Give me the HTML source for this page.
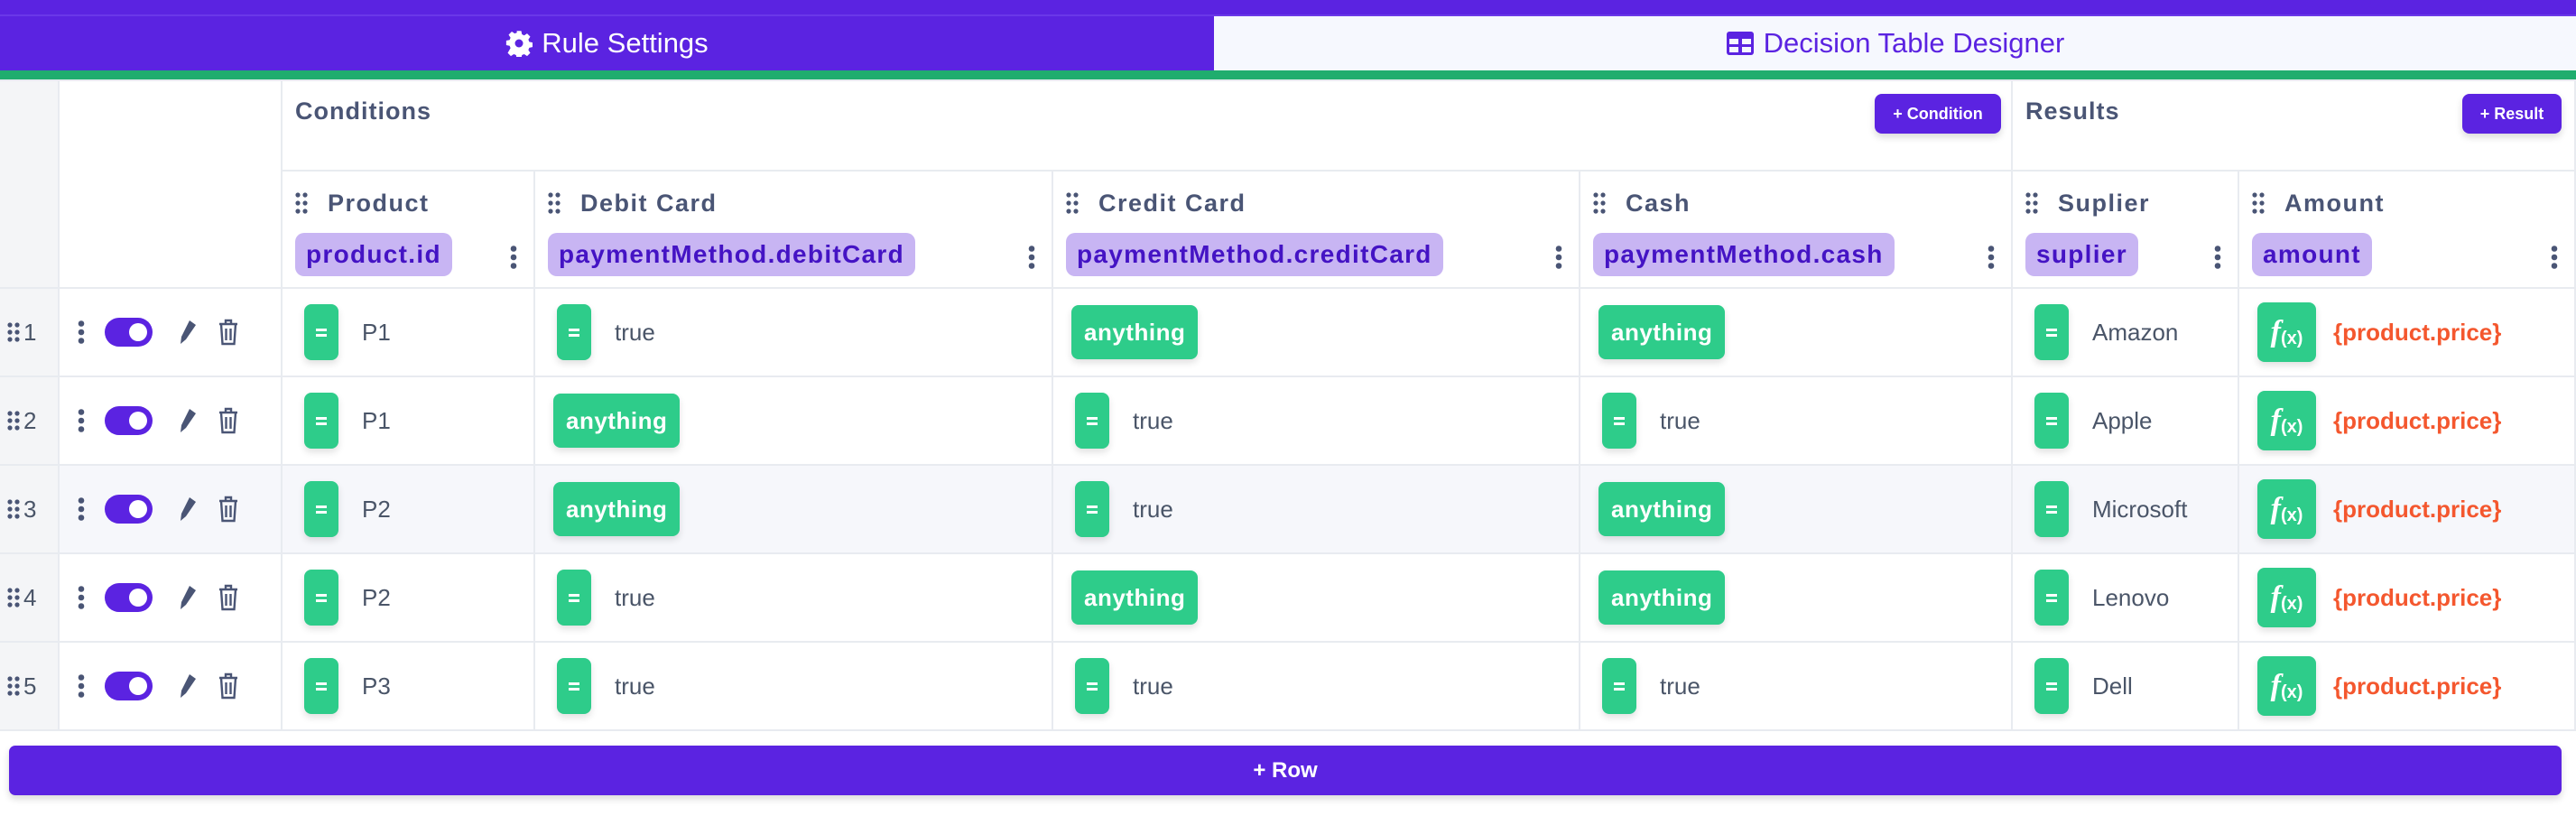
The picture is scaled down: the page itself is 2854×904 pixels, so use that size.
<!DOCTYPE html>
<html><head><meta charset="utf-8">
<style>
*{box-sizing:border-box;margin:0;padding:0}
body{width:2854px;height:904px;background:#fff;font-family:"Liberation Sans",sans-serif;position:relative;overflow:hidden}
.top{position:absolute;left:0;top:0;width:2854px;height:16px;background:#5b23e1}
.topl{position:absolute;left:0;top:16px;width:2854px;height:2px;background:#6a38e8}
.tab{position:absolute;top:18px;height:60px;display:flex;align-items:center;justify-content:center;font-size:31px}
.t1{left:0;width:1345px;background:#5b23e1;color:#fff}
.t2{left:1345px;width:1509px;background:#f6f8fe;color:#5b23e1}
.tab svg{margin-right:10px}
.green{position:absolute;left:0;top:78px;width:2854px;height:10px;background:#20ad6e}
.gap{position:absolute;left:0;top:88px;width:2854px;height:2px;background:#e8ebf0}
.grid{position:absolute;left:0;top:90px;display:grid;grid-template-columns:66px 247px 280px 574px 584px 479px 251px 373px;grid-template-rows:100px 130px 98px 98px 98px 98px 98px}
.c{border-right:2px solid #e8ebf0;border-bottom:2px solid #e8ebf0;position:relative;display:flex;align-items:center}
.sec{align-items:flex-start;padding:18px 0 0 14px;font-size:27px;font-weight:bold;color:#4a5575;letter-spacing:1px}
.btn{position:absolute;top:14px;height:44px;background:#5b23e1;color:#fff;border-radius:8px;font-size:18px;font-weight:bold;display:flex;align-items:center;justify-content:center;box-shadow:0 4px 8px rgba(0,0,0,.15);letter-spacing:0}
.hd{flex-direction:column;align-items:flex-start;justify-content:flex-start;padding:20px 0 0 14px}
.hl{display:flex;align-items:center;font-size:27px;font-weight:bold;color:#4a5575;letter-spacing:1.5px;height:26px;margin-top:2px}
.hl svg{margin-right:22px}
.chip{margin-top:20px;height:48px;background:#c8b5f3;border-radius:10px;color:#4413c4;font-size:28px;font-weight:bold;letter-spacing:1.3px;padding:0 12px;display:flex;align-items:center}
.keb{position:absolute;right:18px;top:82px}
.eq{width:38px;height:62px;background:#2ecc8a;border-radius:8px;box-shadow:0 4px 8px rgba(0,0,0,.12);display:flex;align-items:center;justify-content:center;margin-left:24px;flex:none}
.eq i{display:block;width:12px;height:3px;background:#fff;box-shadow:0 6px 0 #fff;margin-top:-6px}
.txt{font-size:26px;color:#4a5568;margin-left:26px}
.any{margin-left:20px;height:60px;padding:0 14px;background:#2ecc8a;color:#fff;font-size:26px;font-weight:bold;border-radius:8px;display:flex;align-items:center;box-shadow:0 4px 8px rgba(0,0,0,.12);letter-spacing:.5px}
.fx{margin-left:20px;width:65px;height:66px;background:#2ecc8a;border-radius:8px;color:#fff;display:flex;align-items:center;justify-content:center;font-family:"Liberation Serif",serif;font-style:italic;font-weight:bold;font-size:34px;box-shadow:0 4px 8px rgba(0,0,0,.12)}
.fx small{font-family:"Liberation Sans",sans-serif;font-style:normal;font-size:20px;margin-top:14px}
.price{color:#f4572e;font-size:26px;font-weight:bold;margin-left:19px}
.c0{background:#f4f5f7;justify-content:flex-start;padding-left:8px;font-size:26px;color:#4a5568}
.c0 span{margin-left:4px}
.c1{padding-left:20px}
.alt{background:#f6f7fb}
.rowbtn{position:absolute;left:10px;top:826px;width:2828px;height:55px;background:#5b23e1;border-radius:7px;color:#fff;font-size:24px;font-weight:bold;display:flex;align-items:center;justify-content:center;box-shadow:0 4px 8px rgba(0,0,0,.15)}
</style></head><body>
<div class="top"></div><div class="topl"></div>
<div class="tab t1"><svg width="30" height="30" viewBox="0 0 24 24"><path fill="#fff" d="M10 1h4l.6 3 2 1 2.6-1.7 2.8 2.8-1.7 2.6.8 2 3 .6v4l-3 .6-.8 2 1.7 2.6-2.8 2.8-2.6-1.7-2 .8-.6 3h-4l-.6-3-2-.8-2.6 1.7-2.8-2.8L4.5 16.2l-.8-2-3-.6v-4l3-.6.8-2L2.800 4.400 5.600 1.600 8.200 3.300l2-.8z"/><circle cx="12" cy="12" r="3.6" fill="#5b23e1"/></svg>Rule Settings</div>
<div class="tab t2"><svg width="32" height="28" viewBox="0 0 32 28"><rect x="1" y="1" width="30" height="26" rx="3" fill="#5b23e1"/><rect x="4" y="9" width="10" height="6" fill="#f6f8fe"/><rect x="18" y="9" width="10" height="6" fill="#f6f8fe"/><rect x="4" y="18" width="10" height="6" fill="#f6f8fe"/><rect x="18" y="18" width="10" height="6" fill="#f6f8fe"/></svg>Decision Table Designer</div>
<div class="green"></div><div class="gap"></div>

<div class="grid">
<div class="c" style="grid-column:1/2;grid-row:1/3;background:#f4f5f7"></div>
<div class="c" style="grid-column:2/3;grid-row:1/3"></div>
<div class="c sec" style="grid-column:3/7">Conditions<div class="btn" style="left:1764px;width:140px">+ Condition</div></div>
<div class="c sec" style="grid-column:7/9">Results<div class="btn" style="left:498px;width:110px">+ Result</div></div>

<div class="c hd"><div class="hl"><svg width="14" height="24" viewBox="0 0 14 24" fill="#4a5575"><circle cx="3" cy="3" r="2.6"/><circle cx="11" cy="3" r="2.6"/><circle cx="3" cy="12" r="2.6"/><circle cx="11" cy="12" r="2.6"/><circle cx="3" cy="21" r="2.6"/><circle cx="11" cy="21" r="2.6"/></svg>Product</div><div class="chip">product.id</div><svg class="keb" width="8" height="26" viewBox="0 0 8 26" fill="#4a5575"><circle cx="4" cy="3.5" r="3.3"/><circle cx="4" cy="13" r="3.3"/><circle cx="4" cy="22.5" r="3.3"/></svg></div>
<div class="c hd"><div class="hl"><svg width="14" height="24" viewBox="0 0 14 24" fill="#4a5575"><circle cx="3" cy="3" r="2.6"/><circle cx="11" cy="3" r="2.6"/><circle cx="3" cy="12" r="2.6"/><circle cx="11" cy="12" r="2.6"/><circle cx="3" cy="21" r="2.6"/><circle cx="11" cy="21" r="2.6"/></svg>Debit Card</div><div class="chip">paymentMethod.debitCard</div><svg class="keb" width="8" height="26" viewBox="0 0 8 26" fill="#4a5575"><circle cx="4" cy="3.5" r="3.3"/><circle cx="4" cy="13" r="3.3"/><circle cx="4" cy="22.5" r="3.3"/></svg></div>
<div class="c hd"><div class="hl"><svg width="14" height="24" viewBox="0 0 14 24" fill="#4a5575"><circle cx="3" cy="3" r="2.6"/><circle cx="11" cy="3" r="2.6"/><circle cx="3" cy="12" r="2.6"/><circle cx="11" cy="12" r="2.6"/><circle cx="3" cy="21" r="2.6"/><circle cx="11" cy="21" r="2.6"/></svg>Credit Card</div><div class="chip">paymentMethod.creditCard</div><svg class="keb" width="8" height="26" viewBox="0 0 8 26" fill="#4a5575"><circle cx="4" cy="3.5" r="3.3"/><circle cx="4" cy="13" r="3.3"/><circle cx="4" cy="22.5" r="3.3"/></svg></div>
<div class="c hd"><div class="hl"><svg width="14" height="24" viewBox="0 0 14 24" fill="#4a5575"><circle cx="3" cy="3" r="2.6"/><circle cx="11" cy="3" r="2.6"/><circle cx="3" cy="12" r="2.6"/><circle cx="11" cy="12" r="2.6"/><circle cx="3" cy="21" r="2.6"/><circle cx="11" cy="21" r="2.6"/></svg>Cash</div><div class="chip">paymentMethod.cash</div><svg class="keb" width="8" height="26" viewBox="0 0 8 26" fill="#4a5575"><circle cx="4" cy="3.5" r="3.3"/><circle cx="4" cy="13" r="3.3"/><circle cx="4" cy="22.5" r="3.3"/></svg></div>
<div class="c hd"><div class="hl"><svg width="14" height="24" viewBox="0 0 14 24" fill="#4a5575"><circle cx="3" cy="3" r="2.6"/><circle cx="11" cy="3" r="2.6"/><circle cx="3" cy="12" r="2.6"/><circle cx="11" cy="12" r="2.6"/><circle cx="3" cy="21" r="2.6"/><circle cx="11" cy="21" r="2.6"/></svg>Suplier</div><div class="chip">suplier</div><svg class="keb" width="8" height="26" viewBox="0 0 8 26" fill="#4a5575"><circle cx="4" cy="3.5" r="3.3"/><circle cx="4" cy="13" r="3.3"/><circle cx="4" cy="22.5" r="3.3"/></svg></div>
<div class="c hd"><div class="hl"><svg width="14" height="24" viewBox="0 0 14 24" fill="#4a5575"><circle cx="3" cy="3" r="2.6"/><circle cx="11" cy="3" r="2.6"/><circle cx="3" cy="12" r="2.6"/><circle cx="11" cy="12" r="2.6"/><circle cx="3" cy="21" r="2.6"/><circle cx="11" cy="21" r="2.6"/></svg>Amount</div><div class="chip">amount</div><svg class="keb" width="8" height="26" viewBox="0 0 8 26" fill="#4a5575"><circle cx="4" cy="3.5" r="3.3"/><circle cx="4" cy="13" r="3.3"/><circle cx="4" cy="22.5" r="3.3"/></svg></div>

<div class="c c0"><svg width="14" height="22" viewBox="0 0 14 22" fill="#4a5575"><circle cx="3" cy="3" r="2.6"/><circle cx="11" cy="3" r="2.6"/><circle cx="3" cy="11" r="2.6"/><circle cx="11" cy="11" r="2.6"/><circle cx="3" cy="19" r="2.6"/><circle cx="11" cy="19" r="2.6"/></svg><span>1</span></div>
<div class="c c1"><svg width="8" height="26" viewBox="0 0 8 26" fill="#4a5575"><circle cx="4" cy="3.5" r="3.3"/><circle cx="4" cy="13" r="3.3"/><circle cx="4" cy="22.5" r="3.3"/></svg><svg style="margin-left:22px" width="53" height="32" viewBox="0 0 53 32"><rect width="53" height="32" rx="16" fill="#5b23e1"/><circle cx="37" cy="16" r="10" fill="#fff"/></svg><svg style="margin-left:28px" width="22" height="30" viewBox="0 0 22 30"><path d="M13 2l7 5-11 16-6 5 1-8z" fill="#4a5575"/></svg><svg style="margin-left:22px" width="24" height="30" viewBox="0 0 24 30" fill="none" stroke="#4a5575" stroke-width="2.4"><path d="M2 6h20M9 6V2h6v4M4 6l1.5 22h13L20 6M9.5 11v13M14.5 11v13"/></svg></div>
<div class="c"><div class="eq"><i></i></div><span class="txt">P1</span></div>
<div class="c"><div class="eq"><i></i></div><span class="txt">true</span></div>
<div class="c"><div class="any">anything</div></div>
<div class="c"><div class="any">anything</div></div>
<div class="c"><div class="eq"><i></i></div><span class="txt">Amazon</span></div>
<div class="c"><div class="fx">f<small>(x)</small></div><span class="price">{product.price}</span></div>

<div class="c c0"><svg width="14" height="22" viewBox="0 0 14 22" fill="#4a5575"><circle cx="3" cy="3" r="2.6"/><circle cx="11" cy="3" r="2.6"/><circle cx="3" cy="11" r="2.6"/><circle cx="11" cy="11" r="2.6"/><circle cx="3" cy="19" r="2.6"/><circle cx="11" cy="19" r="2.6"/></svg><span>2</span></div>
<div class="c c1"><svg width="8" height="26" viewBox="0 0 8 26" fill="#4a5575"><circle cx="4" cy="3.5" r="3.3"/><circle cx="4" cy="13" r="3.3"/><circle cx="4" cy="22.5" r="3.3"/></svg><svg style="margin-left:22px" width="53" height="32" viewBox="0 0 53 32"><rect width="53" height="32" rx="16" fill="#5b23e1"/><circle cx="37" cy="16" r="10" fill="#fff"/></svg><svg style="margin-left:28px" width="22" height="30" viewBox="0 0 22 30"><path d="M13 2l7 5-11 16-6 5 1-8z" fill="#4a5575"/></svg><svg style="margin-left:22px" width="24" height="30" viewBox="0 0 24 30" fill="none" stroke="#4a5575" stroke-width="2.4"><path d="M2 6h20M9 6V2h6v4M4 6l1.5 22h13L20 6M9.5 11v13M14.5 11v13"/></svg></div>
<div class="c"><div class="eq"><i></i></div><span class="txt">P1</span></div>
<div class="c"><div class="any">anything</div></div>
<div class="c"><div class="eq"><i></i></div><span class="txt">true</span></div>
<div class="c"><div class="eq"><i></i></div><span class="txt">true</span></div>
<div class="c"><div class="eq"><i></i></div><span class="txt">Apple</span></div>
<div class="c"><div class="fx">f<small>(x)</small></div><span class="price">{product.price}</span></div>

<div class="c c0"><svg width="14" height="22" viewBox="0 0 14 22" fill="#4a5575"><circle cx="3" cy="3" r="2.6"/><circle cx="11" cy="3" r="2.6"/><circle cx="3" cy="11" r="2.6"/><circle cx="11" cy="11" r="2.6"/><circle cx="3" cy="19" r="2.6"/><circle cx="11" cy="19" r="2.6"/></svg><span>3</span></div>
<div class="c c1 alt"><svg width="8" height="26" viewBox="0 0 8 26" fill="#4a5575"><circle cx="4" cy="3.5" r="3.3"/><circle cx="4" cy="13" r="3.3"/><circle cx="4" cy="22.5" r="3.3"/></svg><svg style="margin-left:22px" width="53" height="32" viewBox="0 0 53 32"><rect width="53" height="32" rx="16" fill="#5b23e1"/><circle cx="37" cy="16" r="10" fill="#fff"/></svg><svg style="margin-left:28px" width="22" height="30" viewBox="0 0 22 30"><path d="M13 2l7 5-11 16-6 5 1-8z" fill="#4a5575"/></svg><svg style="margin-left:22px" width="24" height="30" viewBox="0 0 24 30" fill="none" stroke="#4a5575" stroke-width="2.4"><path d="M2 6h20M9 6V2h6v4M4 6l1.5 22h13L20 6M9.5 11v13M14.5 11v13"/></svg></div>
<div class="c alt"><div class="eq"><i></i></div><span class="txt">P2</span></div>
<div class="c alt"><div class="any">anything</div></div>
<div class="c alt"><div class="eq"><i></i></div><span class="txt">true</span></div>
<div class="c alt"><div class="any">anything</div></div>
<div class="c alt"><div class="eq"><i></i></div><span class="txt">Microsoft</span></div>
<div class="c alt"><div class="fx">f<small>(x)</small></div><span class="price">{product.price}</span></div>

<div class="c c0"><svg width="14" height="22" viewBox="0 0 14 22" fill="#4a5575"><circle cx="3" cy="3" r="2.6"/><circle cx="11" cy="3" r="2.6"/><circle cx="3" cy="11" r="2.6"/><circle cx="11" cy="11" r="2.6"/><circle cx="3" cy="19" r="2.6"/><circle cx="11" cy="19" r="2.6"/></svg><span>4</span></div>
<div class="c c1"><svg width="8" height="26" viewBox="0 0 8 26" fill="#4a5575"><circle cx="4" cy="3.5" r="3.3"/><circle cx="4" cy="13" r="3.3"/><circle cx="4" cy="22.5" r="3.3"/></svg><svg style="margin-left:22px" width="53" height="32" viewBox="0 0 53 32"><rect width="53" height="32" rx="16" fill="#5b23e1"/><circle cx="37" cy="16" r="10" fill="#fff"/></svg><svg style="margin-left:28px" width="22" height="30" viewBox="0 0 22 30"><path d="M13 2l7 5-11 16-6 5 1-8z" fill="#4a5575"/></svg><svg style="margin-left:22px" width="24" height="30" viewBox="0 0 24 30" fill="none" stroke="#4a5575" stroke-width="2.4"><path d="M2 6h20M9 6V2h6v4M4 6l1.5 22h13L20 6M9.5 11v13M14.5 11v13"/></svg></div>
<div class="c"><div class="eq"><i></i></div><span class="txt">P2</span></div>
<div class="c"><div class="eq"><i></i></div><span class="txt">true</span></div>
<div class="c"><div class="any">anything</div></div>
<div class="c"><div class="any">anything</div></div>
<div class="c"><div class="eq"><i></i></div><span class="txt">Lenovo</span></div>
<div class="c"><div class="fx">f<small>(x)</small></div><span class="price">{product.price}</span></div>

<div class="c c0"><svg width="14" height="22" viewBox="0 0 14 22" fill="#4a5575"><circle cx="3" cy="3" r="2.6"/><circle cx="11" cy="3" r="2.6"/><circle cx="3" cy="11" r="2.6"/><circle cx="11" cy="11" r="2.6"/><circle cx="3" cy="19" r="2.6"/><circle cx="11" cy="19" r="2.6"/></svg><span>5</span></div>
<div class="c c1"><svg width="8" height="26" viewBox="0 0 8 26" fill="#4a5575"><circle cx="4" cy="3.5" r="3.3"/><circle cx="4" cy="13" r="3.3"/><circle cx="4" cy="22.5" r="3.3"/></svg><svg style="margin-left:22px" width="53" height="32" viewBox="0 0 53 32"><rect width="53" height="32" rx="16" fill="#5b23e1"/><circle cx="37" cy="16" r="10" fill="#fff"/></svg><svg style="margin-left:28px" width="22" height="30" viewBox="0 0 22 30"><path d="M13 2l7 5-11 16-6 5 1-8z" fill="#4a5575"/></svg><svg style="margin-left:22px" width="24" height="30" viewBox="0 0 24 30" fill="none" stroke="#4a5575" stroke-width="2.4"><path d="M2 6h20M9 6V2h6v4M4 6l1.5 22h13L20 6M9.5 11v13M14.5 11v13"/></svg></div>
<div class="c"><div class="eq"><i></i></div><span class="txt">P3</span></div>
<div class="c"><div class="eq"><i></i></div><span class="txt">true</span></div>
<div class="c"><div class="eq"><i></i></div><span class="txt">true</span></div>
<div class="c"><div class="eq"><i></i></div><span class="txt">true</span></div>
<div class="c"><div class="eq"><i></i></div><span class="txt">Dell</span></div>
<div class="c"><div class="fx">f<small>(x)</small></div><span class="price">{product.price}</span></div>
</div>

<div class="rowbtn">+ Row</div>
</body></html>
